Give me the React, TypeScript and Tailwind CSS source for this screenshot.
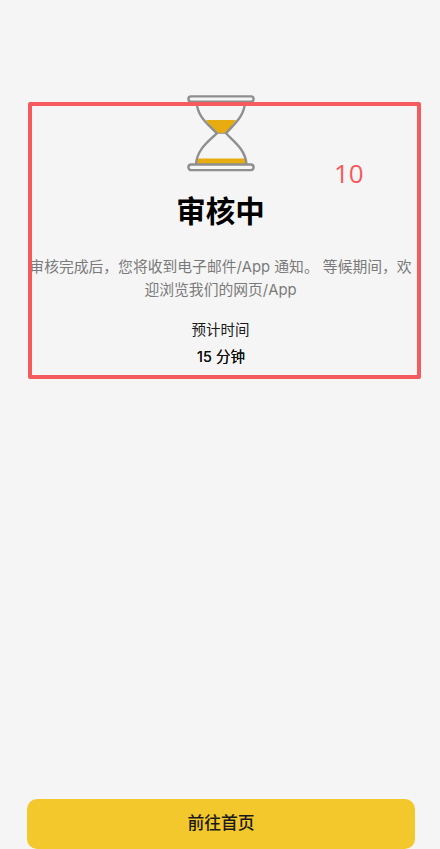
import React from 'react';

const cjk = "font-['Inter','Noto_Sans_CJK_SC',sans-serif]";

const Hourglass: React.FC = () => (
  <svg width="68" height="77" viewBox="0 0 68 77" fill="none">
    <path d="M19 25H49C46 30 42 34 39 38H29.7C26 34 22 30 19 25Z" fill="#e6ac10" />
    <path d="M10 63.5H58.5L59.5 69H9Z" fill="#e6ac10" />
    <path
      d="M9.7 6.7C10 22 22 30 29.7 38.3C22 46 10 54 9 69.3M58 6.7C57.500 22 46 30 39 38.3C46 46 58.500 54 59.500 69.300"
      stroke="#8f8f8f"
      strokeWidth="2.400"
    />
    <path d="M29.700 38.300H39" stroke="#8f8f8f" strokeWidth="1" />
    <rect x="1.400" y="1.400" width="65.200" height="5.200" rx="2.600" stroke="#8f8f8f" strokeWidth="2.400" fill="#f5f5f5" />
    <rect x="1.400" y="69.500" width="65.200" height="5.600" rx="2.800" stroke="#8f8f8f" strokeWidth="2.400" fill="#f5f5f5" />
  </svg>
);

const App: React.FC = () => {
  return (
    <div className={`relative flex h-[849px] w-[440px] flex-col items-center overflow-hidden bg-[#f5f5f5] ${cjk}`}>
      <div className="mt-[95px] ml-[2px]">
        <Hourglass />
      </div>
      <h1 className="mt-[19px] ml-[1px] text-[29.500px] leading-[40px] font-bold text-black">审核中</h1>
      <p className="mt-[25px] ml-[1px] w-[384px] text-center text-[14.800px] leading-[23px] text-[#7a7a7a]">
        审核完成后，您将收到电子邮件/App 通知。 等候期间，欢迎浏览我们的网页/App
      </p>
      <div className="mt-[16px] ml-[1px] text-[14.500px] leading-[24px] text-[#1a1a1a]">预计时间</div>
      <div className="mt-[3px] ml-[2px] text-[14.500px] leading-[24px] font-normal text-[#111111] [text-shadow:0_0_0.4px_#111111]">15 分钟</div>

      <button className="mt-auto ml-[2px] h-[50px] w-[388px] rounded-[10px] bg-[#f3c82c] text-[16.800px] font-medium text-[#1a1a1a]">
        前往首页
      </button>

      {/* annotation over the page */}
      <div className="absolute top-[102px] left-[28px] h-[277px] w-[393px] rounded-[2px] border-4 border-[#f55b5d]" />
      <span className="absolute top-[157px] left-[334px] font-['Open_Sans',sans-serif] text-[26px] leading-[32px] text-[#f55b5d]">10</span>
    </div>
  );
};

export default App;
